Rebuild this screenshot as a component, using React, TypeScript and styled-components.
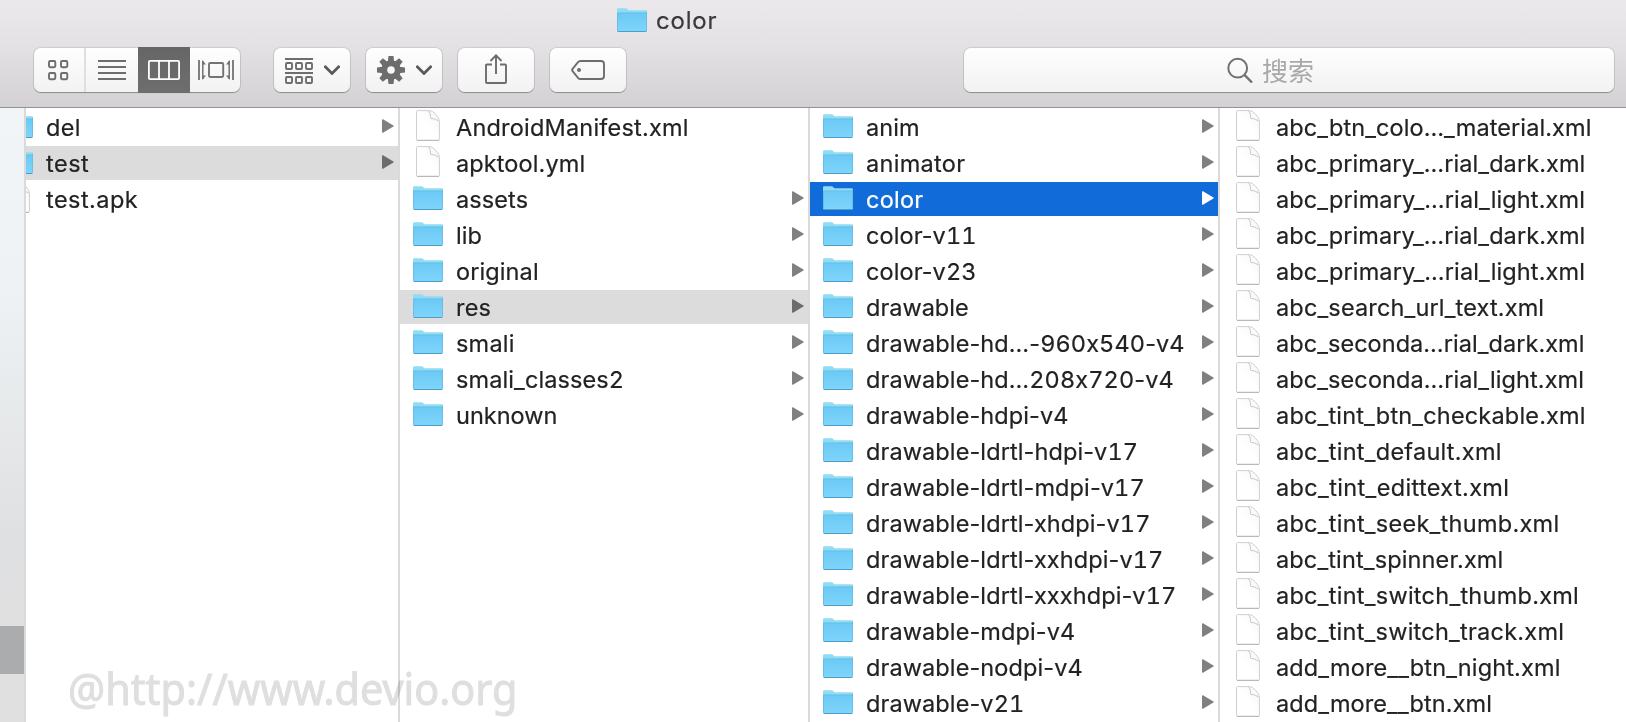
import React from 'react';
import styled, { createGlobalStyle, css } from 'styled-components';

const GlobalStyle = createGlobalStyle`
  html, body { margin: 0; padding: 0; }
  body {
    overflow: hidden;
    background: #fff;
    font-family: Inter, "Liberation Sans", "Noto Sans CJK SC", sans-serif;
  }
  svg { display: block; flex: none; }
`;

const Window = styled.div`
  position: relative;
  width: 1626px;
  height: 722px;
  display: flex;
  flex-direction: column;
  overflow: hidden;
`;

const Header = styled.header`
  box-sizing: border-box;
  height: 108px;
  flex: none;
  background: linear-gradient(#ece9ec 0%, #e5e2e5 40%, #d3d1d3 100%);
  border-bottom: 1px solid #949294;
`;

const TitleBar = styled.div`
  height: 48px;
  box-sizing: border-box;
  padding: 8px 0 0 617px;
  display: flex;
  align-items: flex-start;
`;

const Title = styled.h1`
  margin: -3px 0 0 9px;
  font-size: 24px;
  line-height: 32px;
  font-weight: 400;
  letter-spacing: 0.8px;
  color: #3a393b;
  -webkit-text-stroke: 0.2px currentColor;
`;

const Toolbar = styled.div`
  display: flex;
  padding: 0 12px 0 34px;
`;

const raised = css`
  height: 44px;
  border-radius: 7px;
  background: linear-gradient(#fefefe, #f3f2f3);
  box-shadow: 0 0 0 1px rgba(0, 0, 0, 0.09), 0 1px 1px rgba(0, 0, 0, 0.28);
`;

const Segments = styled.div`
  ${raised}
  display: flex;
  align-items: center;
  width: 206px;
  margin-right: 34px;
`;

const Segment = styled.button<{ $width: number; $active?: boolean; $divided?: boolean }>`
  box-sizing: border-box;
  flex: none;
  width: ${p => p.$width}px;
  height: ${p => (p.$active ? 46 : 44)}px;
  padding: 0;
  border: 0;
  border-right: ${p => (p.$divided ? '2px solid #e0dfe0' : '0')};
  background: ${p => (p.$active ? 'linear-gradient(#666, #6e6e6e)' : 'none')};
  display: flex;
  align-items: center;
  justify-content: center;
`;

const ToolButton = styled.button<{ $lift?: number }>`
  ${raised}
  width: 76px;
  margin: 0 16px 0 0;
  padding: 0 0 ${p => p.$lift ?? 0}px;
  border: 0;
  display: flex;
  align-items: center;
  justify-content: center;
`;

const MenuFace = styled.span`
  display: flex;
  align-items: center;
  gap: 11px;
  padding-left: 1px;
`;

const SearchField = styled.div`
  ${raised}
  width: 650px;
  margin-left: auto;
  display: flex;
  align-items: center;
  padding-left: 263px;
  box-sizing: border-box;
`;

const Placeholder = styled.span`
  margin-left: 9px;
  font-family: "Noto Sans CJK SC", sans-serif;
  font-size: 26px;
  line-height: 40px;
  color: #a9a8a9;
`;

const Browser = styled.main`
  flex: 1;
  min-height: 0;
  display: flex;
`;

const Sidebar = styled.aside`
  width: 24px;
  flex: none;
  padding-top: 518px;
  box-sizing: border-box;
  background: linear-gradient(#f1f5f7 0, #eef2f4 180px, #dfe0e1 430px, #e1e0e1 100%);
`;

const SidebarSelection = styled.div`
  height: 48px;
  background: #abacae;
`;

const Column = styled.section<{ $width: number }>`
  width: ${p => p.$width}px;
  box-sizing: content-box;
  flex: none;
  border-left: 2px solid #dadada;
  overflow: hidden;
  display: flex;
  justify-content: flex-end;
`;

const List = styled.ul`
  list-style: none;
  width: 408px;
  flex: none;
  margin: 0;
  padding: 2px 0 0;
  display: flex;
  flex-direction: column;
  gap: 2px;
`;

type Selection = 'path' | 'focus' | undefined;

const Row = styled.li<{ $selection: Selection }>`
  height: 34px;
  flex: none;
  box-sizing: border-box;
  padding: 0 4px 0 13px;
  display: flex;
  align-items: flex-start;
  color: ${p => (p.$selection === 'focus' ? '#fff' : '#222')};
  background: ${p =>
    p.$selection === 'focus' ? '#116bd8' : p.$selection === 'path' ? '#dcdcdc' : 'transparent'};
`;

const IconSlot = styled.span<{ $kind: 'folder' | 'file' }>`
  width: 30px;
  padding-top: ${p => (p.$kind === 'folder' ? 4 : 0)}px;
  display: flex;
  justify-content: center;
`;

const Name = styled.span<{ $tracking: number }>`
  flex: 1;
  margin-left: 13px;
  font-size: 23.5px;
  line-height: 35px;
  font-feature-settings: "calt" 0;
  letter-spacing: ${p => p.$tracking}px;
  white-space: nowrap;
  -webkit-text-stroke: 0.2px currentColor;
`;

const Digits = styled.span`
  font-feature-settings: "calt" 0, "tnum" 1;
`;

const Arrow = styled.span<{ $selection: Selection }>`
  padding-top: 9px;
  color: ${p => (p.$selection === 'focus' ? '#fff' : p.$selection === 'path' ? '#6c6c6c' : '#808080')};
`;

const Watermark = styled.div`
  position: absolute;
  left: 68px;
  top: 664px;
  font-family: "Noto Sans", sans-serif;
  font-size: 43px;
  line-height: 50px;
  white-space: nowrap;
  color: #dfdfdf;
  -webkit-text-stroke: 1px #dfdfdf;
  mix-blend-mode: multiply;
  transform: scaleX(0.961);
  transform-origin: left center;
`;

const FolderIcon = () => (
  <svg width="30" height="25" viewBox="0 0 30 25">
    <defs>
      <linearGradient id="folderFront" x1="0" y1="0" x2="0" y2="1">
        <stop offset="0" stopColor="#6cc9f5" />
        <stop offset="1" stopColor="#7ed5fb" />
      </linearGradient>
    </defs>
    <path d="M0 23V1.6Q0 .3 1.3 .3H8.6Q9.6 .3 10.2 1L10.8 1.7Q11.3 2.3 12.2 2.3H28.7Q30 2.3 30 3.6V23Z" fill="#8fdcf6" />
    <path d="M.3 5.2H29.7V22.4Q29.7 23.4 28.7 23.4H1.3Q.3 23.4 .3 22.4Z" fill="url(#folderFront)" />
    <path d="M.4 5H29.6" stroke="#5fb9e0" strokeWidth=".9" />
    <path d="M.4 5V22.6M29.6 3.6V22.6" stroke="#62b6dc" strokeWidth=".8" />
    <path d="M.6 23.5H29.4" stroke="#4d9fc9" strokeWidth="1" />
  </svg>
);

const FileIcon = () => (
  <svg width="24" height="31" viewBox="0 0 24 31">
    <defs>
      <linearGradient id="fileFold" x1="0" y1="1" x2="1" y2="0">
        <stop offset="0.5" stopColor="#fff" />
        <stop offset="1" stopColor="#f5f5f5" />
      </linearGradient>
    </defs>
    <path d="M1.5 .6H13.5Q16.5 .8 19 3.6L21.5 6.6Q23.4 9 23.4 12V29.3Q23.4 30.3 22.4 30.3H1.5Q.5 30.3 .5 29.3V1.6Q.5 .6 1.5 .6Z" fill="url(#fileFold)" stroke="#cfcfcf" strokeWidth="1" />
    <path d="M1 30.4H23" stroke="#b4b4b4" strokeWidth="1" />
    <path d="M12.5 1Q14.6 2.6 14.8 8.4Q19 8.4 22.6 11" fill="none" stroke="#c4c4c4" strokeWidth=".9" />
  </svg>
);

const ArrowIcon = () => (
  <svg width="12" height="14" viewBox="0 0 12 14">
    <path d="M0 .9Q0 -.2 1 .3L11.4 6.4Q12.2 7 11.4 7.6L1 13.7Q0 14.2 0 13.1Z" fill="currentColor" />
  </svg>
);

const GridIcon = () => (
  <svg width="22" height="20" viewBox="0 0 22 20" overflow="visible" fill="none" stroke="#6d6d6d" strokeWidth="1.9">
    {[1, 13].map(y => [1, 13].map(x => <rect key={`${x}-${y}`} x={x} y={y} width="6.3" height="6.3" rx="1.2" />))}
  </svg>
);

const ListIcon = () => (
  <svg width="28" height="20" viewBox="0 0 28 20" fill="#6d6d6d">
    {[0, 6, 12, 18].map(y => <rect key={y} y={y} width="28" height="2" />)}
  </svg>
);

const ColumnsIcon = () => (
  <svg width="32" height="20" viewBox="0 0 32 20">
    <rect x=".9" y=".9" width="30.2" height="18.2" rx="1.2" fill="none" stroke="#fff" strokeWidth="1.8" />
    <path d="M11 1V19M21 1V19" stroke="#fff" strokeWidth="1.8" />
  </svg>
);

const CoverFlowIcon = () => (
  <svg width="36" height="20" viewBox="-1 0 36 20" overflow="visible" fill="none" stroke="#737373">
    <rect x="11" y="3" width="14.2" height="14" rx="1.2" strokeWidth="1.9" />
    <path d="M1 0V20M35 0V20" strokeWidth="1.8" />
    <path d="M4.8 1V19M31.2 1V19" strokeWidth="1.5" />
    <path d="M4.4 0L8 4.4H4.4ZM4.4 20L8 15.6H4.4ZM31.6 0L28 4.4H31.6ZM31.6 20L28 15.6H31.6Z" fill="#737373" stroke="none" />
  </svg>
);

const ArrangeIcon = () => (
  <svg width="28" height="28" viewBox="0 -2 28 28" fill="none" stroke="#6d6d6d" strokeWidth="1.9">
    <path d="M0 1H28M0 15H28" />
    {[5, 19].map(y => [1, 11, 21].map(x => <rect key={`${x}-${y}`} x={x} y={y} width="6" height="6" rx="1" />))}
  </svg>
);

const GearIcon = () => (
  <svg width="28" height="28" viewBox="-14 -14 28 28" fill="#6d6d6d">
    {[0, 45, 90, 135, 180, 225, 270, 315].map(a => (
      <path key={a} d="M-3.2 -8L-2.5 -14H2.5L3.2 -8Z" transform={`rotate(${a})`} />
    ))}
    <circle r="6.8" fill="none" stroke="#6d6d6d" strokeWidth="6" />
  </svg>
);

const ChevronIcon = () => (
  <svg width="16" height="10" viewBox="0 0 16 10" fill="none" stroke="#585858" strokeWidth="2.7">
    <path d="M1.3 1.8L8 8.5L14.7 1.8" strokeLinecap="round" />
  </svg>
);

const ShareIcon = () => (
  <svg width="22" height="30" viewBox="0 0 22 30" fill="none" stroke="#6d6d6d" strokeWidth="1.9">
    <path d="M7 10.5H2Q1 10.5 1 11.5V28Q1 29 2 29H20Q21 29 21 28V11.5Q21 10.5 20 10.5H15" />
    <path d="M11 20V1.5M5.5 7L11 1.3L16.5 7" />
  </svg>
);

const TagIcon = () => (
  <svg width="34" height="20" viewBox="0 0 34 20">
    <path d="M9.5 1H30Q33 1 33 4V16Q33 19 30 19H9.5Q8 19 7 17.8L1.6 11.2Q.6 10 1.6 8.8L7 2.2Q8 1 9.5 1Z" fill="none" stroke="#6d6d6d" strokeWidth="1.9" />
    <circle cx="8" cy="10" r="2" fill="#6d6d6d" />
  </svg>
);

const SearchIcon = () => (
  <svg width="26" height="26" viewBox="0 -0.5 26 26" fill="none" stroke="#727272" strokeWidth="2">
    <circle cx="10.7" cy="10.7" r="9.4" />
    <path d="M17.4 17.4L25 25" strokeWidth="2.4" />
  </svg>
);

type Entry = { name: string; kind: 'folder' | 'file'; selection?: Selection; tracking: number };

const folder = (name: string, tracking = 0.1, selection?: Selection): Entry => ({ name, kind: 'folder', selection, tracking });
const file = (name: string, tracking = 0.1): Entry => ({ name, kind: 'file', tracking });

const columns: { width: number; entries: Entry[] }[] = [
  { width: 372, entries: [folder('del', 0.3), folder('test', 0.5, 'path'), file('test.apk', 0.45)] },
  {
    width: 408,
    entries: [
      file('AndroidManifest.xml', 0.2), file('apktool.yml'), folder('assets'), folder('lib'), folder('original'),
      folder('res', 0.2, 'path'), folder('smali', 0.2), folder('smali_classes2', 0.1), folder('unknown', 0),
    ],
  },
  {
    width: 408,
    entries: [
      folder('anim'), folder('animator', 0.3), folder('color', 0.25, 'focus'), folder('color-v11'), folder('color-v23'),
      folder('drawable', 0), folder('drawable-hd…-960x540-v4'), folder('drawable-hd…208x720-v4'),
      folder('drawable-hdpi-v4'), folder('drawable-ldrtl-hdpi-v17'), folder('drawable-ldrtl-mdpi-v17'),
      folder('drawable-ldrtl-xhdpi-v17'), folder('drawable-ldrtl-xxhdpi-v17'), folder('drawable-ldrtl-xxxhdpi-v17'),
      folder('drawable-mdpi-v4'), folder('drawable-nodpi-v4'), folder('drawable-v21'),
    ],
  },
  {
    width: 408,
    entries: [
      file('abc_btn_colo…_material.xml', 0.1), file('abc_primary_…rial_dark.xml', 0.08), file('abc_primary_…rial_light.xml', 0.12),
      file('abc_primary_…rial_dark.xml', 0.08), file('abc_primary_…rial_light.xml', 0.12), file('abc_search_url_text.xml', 0.15),
      file('abc_seconda…rial_dark.xml', 0.05), file('abc_seconda…rial_light.xml', 0.09), file('abc_tint_btn_checkable.xml', 0.18),
      file('abc_tint_default.xml', 0.26), file('abc_tint_edittext.xml', 0.36), file('abc_tint_seek_thumb.xml', 0.27),
      file('abc_tint_spinner.xml', 0.14), file('abc_tint_switch_thumb.xml', 0.26), file('abc_tint_switch_track.xml', 0.24),
      file('add_more__btn_night.xml', 0.13), file('add_more__btn.xml', 0.1),
    ],
  },
];

const FileName = ({ entry }: { entry: Entry }) => (
  <Name $tracking={entry.tracking}>
    {entry.name.split(/(\d+)/).map((part, i) => (i % 2 ? <Digits key={i}>{part}</Digits> : part))}
  </Name>
);

export default function App() {
  return (
    <>
      <GlobalStyle />
      <Window>
        <Header>
          <TitleBar>
            <FolderIcon />
            <Title>color</Title>
          </TitleBar>
          <Toolbar>
            <Segments>
              <Segment $width={52} $divided><GridIcon /></Segment>
              <Segment $width={52}><ListIcon /></Segment>
              <Segment $width={52} $active><ColumnsIcon /></Segment>
              <Segment $width={50}><CoverFlowIcon /></Segment>
            </Segments>
            <ToolButton><MenuFace><ArrangeIcon /><ChevronIcon /></MenuFace></ToolButton>
            <ToolButton><MenuFace><GearIcon /><ChevronIcon /></MenuFace></ToolButton>
            <ToolButton $lift={2}><ShareIcon /></ToolButton>
            <ToolButton><TagIcon /></ToolButton>
            <SearchField><SearchIcon /><Placeholder>搜索</Placeholder></SearchField>
          </Toolbar>
        </Header>
        <Browser>
          <Sidebar><SidebarSelection /></Sidebar>
          {columns.map((column, c) => (
            <Column key={c} $width={column.width}>
              <List>
                {column.entries.map((entry, i) => (
                  <Row key={i} $selection={entry.selection}>
                    <IconSlot $kind={entry.kind}>{entry.kind === 'folder' ? <FolderIcon /> : <FileIcon />}</IconSlot>
                    <FileName entry={entry} />
                    {entry.kind === 'folder' && <Arrow $selection={entry.selection}><ArrowIcon /></Arrow>}
                  </Row>
                ))}
              </List>
            </Column>
          ))}
        </Browser>
        <Watermark>@http://www.devio.org</Watermark>
      </Window>
    </>
  );
}
